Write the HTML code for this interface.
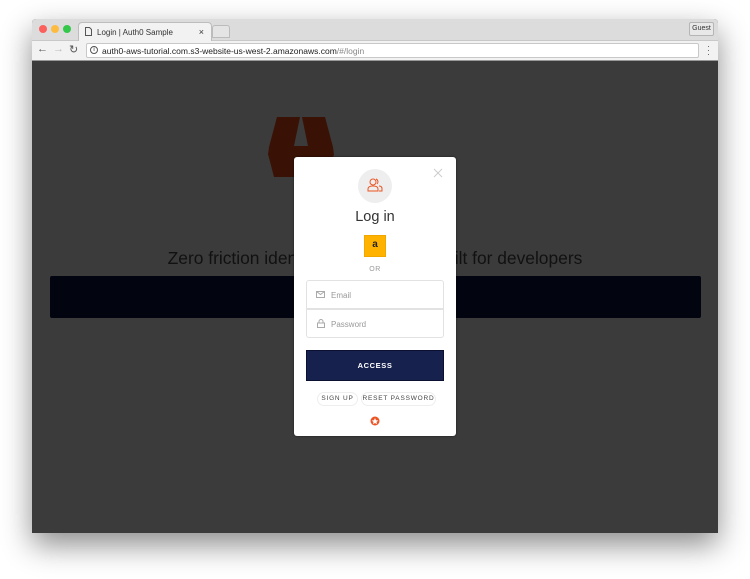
<!DOCTYPE html>
<html><head><meta charset="utf-8"><style>
*{box-sizing:border-box;margin:0;padding:0}
body{width:750px;height:579px;background:#fff;font-family:"Liberation Sans",sans-serif;position:relative;overflow:hidden}
.win{position:absolute;left:32px;top:19px;width:686px;height:514px;background:#3b3b3b;box-shadow:0 12px 30px rgba(0,0,0,.45);border-radius:4px 4px 0 0;overflow:hidden}
.tabs{position:absolute;left:0;top:0;width:686px;height:22px;background:#dcdcdc;border-bottom:1px solid #c8c8c8}
.dot{position:absolute;top:6px;width:8px;height:8px;border-radius:50%}
.tab{position:absolute;left:46px;top:3px;width:134px;height:20px;background:#f2f2f2;border:1px solid #bdbdbd;border-bottom:none;border-radius:4px 4px 0 0;font-size:8px;color:#333;padding:5px 0 0 18px}
.tab2{position:absolute;left:180px;top:6px;width:18px;height:13px;background:#e4e4e4;border:1px solid #bbb;border-radius:3px 3px 0 0}
.guest{position:absolute;right:4px;top:3px;width:25px;height:14px;border:1px solid #b5b5b5;border-radius:2px;background:#e8e8e8;font-size:7px;color:#333;text-align:center;line-height:12px}
.bar{position:absolute;left:0;top:22px;width:686px;height:20px;background:#f2f2f2;border-bottom:1px solid #999}
.url{position:absolute;left:54px;top:2px;width:613px;height:15px;background:#fff;border:1px solid #c8c8c8;border-radius:2px;font-size:8.5px;color:#222;padding:2px 0 0 15px}
.content{position:absolute;left:0;top:42px;width:686px;height:472px;background:#3b3b3b}
.h{position:absolute;left:0;width:686px;top:187px;text-align:center;font-size:17.4px;color:#111}
.blk{position:absolute;left:18px;top:215px;width:651px;height:42px;background:#020510;border-radius:2px}
.modal{position:absolute;left:294px;top:157px;width:162px;height:279px;background:#fff;border-radius:3px;box-shadow:0 0 2px rgba(0,0,0,.6)}
.c{position:absolute;left:0;width:162px;text-align:center}
.inp{position:absolute;left:12px;width:138px;height:29px;border:1px solid #e2e2e2;font-size:8px;color:#999;padding:10px 0 0 24px}
.pill{position:absolute;top:235px;height:14px;border:1px solid #eee;border-radius:7px;font-size:6.5px;letter-spacing:.8px;color:#444;text-align:center;line-height:12px}
</style></head><body>
<div class="win">
 <div class="tabs">
  <div class="dot" style="left:7px;background:#fc605c"></div>
  <div class="dot" style="left:19px;background:#fdbc40"></div>
  <div class="dot" style="left:31px;background:#34c84a"></div>
  <div class="tab"><svg style="position:absolute;left:6px;top:4px" width="7" height="9"><path d="M.5.5h4l2 2v6h-6z" fill="none" stroke="#555"/></svg>Login | Auth0 Sample<span style="position:absolute;right:7px;top:4px;font-size:9px">×</span></div>
  <div class="tab2"></div>
  <div class="guest">Guest</div>
 </div>
 <div class="bar">
  <span style="position:absolute;left:5px;top:2px;font-size:11px;color:#555">←</span>
  <span style="position:absolute;left:21px;top:2px;font-size:11px;color:#bbb">→</span>
  <span style="position:absolute;left:37px;top:2px;font-size:11px;color:#555">↻</span>
  <div class="url"><span style="position:absolute;left:3px;top:2px;width:8px;height:8px;border:1px solid #555;border-radius:50%;font-size:6px;line-height:6px;text-align:center">i</span>auth0-aws-tutorial.com.s3-website-us-west-2.amazonaws.com<span style="color:#888">/#/login</span></div>
  <span style="position:absolute;right:8px;top:3px;font-size:9px;color:#555;line-height:4px">·<br>·<br>·</span>
 </div>
 <div class="content">
  <svg style="position:absolute;left:236px;top:56px" width="66" height="60"><polygon points="9,0 32,0 26,29 0,38 1,30" fill="#3a1205"/><polygon points="34,0 57,0 65,30 66,38 40,29" fill="#3a1205"/><polygon points="0,37 26,29 40,29 66,37 60,60 6,60" fill="#3a1205"/></svg>
  <div class="h">Zero friction identity infrastructure, built for developers</div>
  <div class="blk"></div>
 </div>
</div>
<div class="modal">
 <svg style="position:absolute;left:139px;top:11px" width="10" height="10"><path d="M1 1L9 9M9 1L1 9" stroke="#ccc" stroke-width="1"/></svg>
 <div style="position:absolute;left:64px;top:12px;width:34px;height:34px;border-radius:50%;background:#eee"></div>
 <svg style="position:absolute;left:73px;top:20px" width="16" height="16" fill="none" stroke="#eb5424" stroke-width="1"><circle cx="6" cy="5" r="3"/><path d="M1 14v-2c0-2 2-3 5-3s5 1 5 3v2z"/><path d="M9 2a3 3 0 0 1 1 5M12 9c2 0 3 1 3 3v2h-3"/></svg>
 <div class="c" style="top:52px;font-size:14.5px;color:#333">Log in</div>
 <div style="position:absolute;left:70px;top:78px;width:22px;height:22px;background:#ffb300;border:1px solid #f0a800;text-align:center;font-size:10px;font-weight:bold;color:#222;line-height:17px">a</div>
 <div class="c" style="top:109px;font-size:7px;color:#999;letter-spacing:.5px">OR</div>
 <div class="inp" style="top:123px;border-radius:3px 3px 0 0">Email<svg style="position:absolute;left:9px;top:10px" width="9" height="7"><rect x=".5" y=".5" width="8" height="6" fill="none" stroke="#aaa"/><path d="M.5.5l4 3 4-3" fill="none" stroke="#aaa"/></svg></div>
 <div class="inp" style="top:152px;border-radius:0 0 3px 3px">Password<svg style="position:absolute;left:10px;top:9px" width="8" height="9"><path d="M2 4V2.5a2 2 0 0 1 4 0V4" fill="none" stroke="#aaa"/><rect x=".5" y="4" width="7" height="4.5" fill="none" stroke="#aaa"/></svg></div>
 <div style="position:absolute;left:12px;top:193px;width:138px;height:31px;background:#16214d;border:1px solid #0b1030;color:#fff;font-size:7.5px;font-weight:bold;letter-spacing:.6px;text-align:center;line-height:29px">ACCESS</div>
 <div class="pill" style="left:23px;width:41px">SIGN UP</div>
 <div class="pill" style="left:67px;width:75px">RESET PASSWORD</div>
 <svg style="position:absolute;left:76px;top:259px" width="10" height="10"><circle cx="5" cy="5" r="4.5" fill="#eb5424"/><polygon points="5,2 6,4.3 8.3,4.5 6.5,6 7,8.2 5,7 3,8.2 3.5,6 1.7,4.5 4,4.3" fill="#fff"/></svg>
</div>
</body></html>
